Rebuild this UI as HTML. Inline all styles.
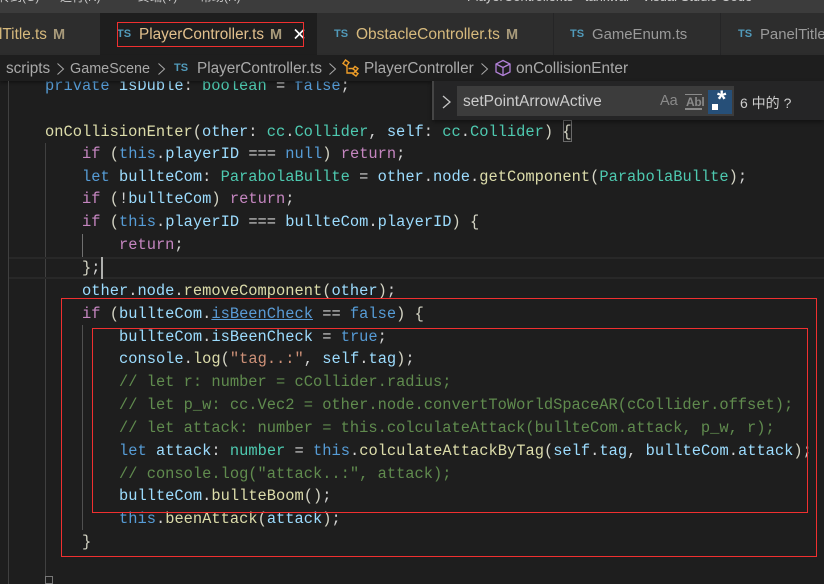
<!DOCTYPE html>
<html><head><meta charset="utf-8">
<style>
html,body{margin:0;padding:0;background:#1e1e1e}
#r{position:relative;width:824px;height:584px;overflow:hidden;background:#1e1e1e;font-family:"Liberation Sans","Noto Sans CJK SC",sans-serif}
.a{position:absolute}
.t{position:absolute;white-space:pre;font-size:15.3px;line-height:20px}
.l{position:absolute;white-space:pre;font-family:"Liberation Mono",monospace;font-size:15.4px;line-height:22px;color:#d4d4d4;margin-top:1px}
.k{color:#569cd6}.c{color:#c586c0}.v{color:#9cdcfe}.n{color:#4ec9b0}.f{color:#dcdcaa}.g{color:#608b4e}.s{color:#ce9178}.b{color:#d4d4c4}
.r{position:absolute;border:1px solid #f03030;box-sizing:border-box}
.g1{position:absolute;width:1px;background:#404040}
.ts{position:absolute;font-size:11px;font-weight:bold;color:#519aba;line-height:14px}
</style></head><body><div id="r">
<div class="l" style="left:45px;top:74px"><span class="k">private</span> <span class="v">isDuble</span>: <span class="n">boolean</span> = <span class="k">false</span>;</div>

<div class="a" style="left:0;top:0;width:824px;height:13px;background:#3c3c3c"></div>
<div class="t" style="left:-2px;top:-13px;color:#ccc;font-size:12px">转到(G)</div>
<div class="t" style="left:60px;top:-13px;color:#ccc;font-size:12px">运行(R)</div>
<div class="t" style="left:138px;top:-13px;color:#ccc;font-size:12px">终端(T)</div>
<div class="t" style="left:200px;top:-13px;color:#ccc;font-size:12px">帮助(H)</div>
<div class="t" style="left:467px;top:-13px;color:#ccc;font-size:13px">PlayerController.ts - tankwar - Visual Studio Code</div>

<div class="a" style="left:0;top:13px;width:824px;height:42px;background:#2d2d2d"></div>
<div class="a" style="left:100px;top:13px;width:217px;height:42px;background:#1e1e1e"></div>
<div class="a" style="left:553px;top:13px;width:1px;height:42px;background:#252526"></div>
<div class="a" style="left:720px;top:13px;width:1px;height:42px;background:#252526"></div>

<div class="t" style="left:-1px;top:25px;color:#d7ba7d">lTitle.ts</div>
<div class="t" style="left:53px;top:25px;color:#a89a7a;font-weight:bold;font-size:14.5px">M</div>
<div class="ts" style="left:117px;top:27px">TS</div>
<div class="t" style="left:139px;top:25px;color:#e2c08d">PlayerController.ts</div>
<div class="t" style="left:270px;top:25px;color:#a89a7a;font-weight:bold;font-size:14.5px">M</div>
<svg class="a" style="left:293px;top:27px" width="12" height="14"><path d="M2 2.5L11 11.5M11 2.5L2 11.5" stroke="#fff" stroke-width="1.6"/></svg>
<div class="ts" style="left:334px;top:27px">TS</div>
<div class="t" style="left:356px;top:25px;color:#d7ba7d;font-size:15.5px">ObstacleController.ts</div>
<div class="t" style="left:506px;top:25px;color:#a89a7a;font-weight:bold;font-size:14.5px">M</div>
<div class="ts" style="left:570px;top:27px">TS</div>
<div class="t" style="left:592px;top:25px;color:#9a9a9a;font-size:14.9px">GameEnum.ts</div>
<div class="ts" style="left:738px;top:27px">TS</div>
<div class="t" style="left:760px;top:25px;color:#9a9a9a;font-size:14.9px">PanelTitle</div>
<div class="r" style="left:117px;top:22px;width:187px;height:25px"></div>

<div class="a" style="left:0;top:55px;width:824px;height:26px;background:#1e1e1e;box-shadow:0 2px 3px rgba(0,0,0,.35)"></div>
<div class="t" style="left:6px;top:59px;color:#a9a9a9">scripts</div>
<svg class="a" style="left:56px;top:62px" width="9" height="14"><path d="M1.5 1.5L7.5 7L1.5 12.5" fill="none" stroke="#a9a9a9" stroke-width="1"/></svg>
<div class="t" style="left:70px;top:59px;color:#a9a9a9;font-size:14.4px">GameScene</div>
<svg class="a" style="left:157px;top:62px" width="9" height="14"><path d="M1.5 1.5L7.5 7L1.5 12.5" fill="none" stroke="#a9a9a9" stroke-width="1"/></svg>
<div class="ts" style="left:174px;top:61px">TS</div>
<div class="t" style="left:197px;top:59px;color:#a9a9a9">PlayerController.ts</div>
<svg class="a" style="left:328px;top:62px" width="9" height="14"><path d="M1.5 1.5L7.5 7L1.5 12.5" fill="none" stroke="#a9a9a9" stroke-width="1"/></svg>
<svg class="a" style="left:342px;top:59px" width="18" height="18"><g fill="none" stroke="#ee9d28" stroke-width="1.4"><path d="M3.5 1L7 3.5L4.5 7L1 4.5Z"/><path d="M13 7.5L16 9.5L14 12L11 10Z"/><path d="M13 12.5L16 14.5L14 17L11 15Z"/><path d="M5 7V14H11M6.5 9.5H11"/></g></svg>
<div class="t" style="left:364px;top:59px;color:#a9a9a9">PlayerController</div>
<svg class="a" style="left:480px;top:62px" width="9" height="14"><path d="M1.5 1.5L7.5 7L1.5 12.5" fill="none" stroke="#a9a9a9" stroke-width="1"/></svg>
<svg class="a" style="left:494px;top:59px" width="18" height="18"><g fill="none" stroke="#b180d7" stroke-width="1.3"><path d="M9 1.5L16 5V13L9 16.5L2 13V5Z"/><path d="M2 5L9 8.5L16 5M9 8.5V16.5"/></g></svg>
<div class="t" style="left:516px;top:59px;color:#a9a9a9;font-size:15.4px">onCollisionEnter</div>

<div class="a" style="left:8px;top:81px;width:1px;height:503px;background:#404040"></div>
<div class="g1" style="left:45px;top:143px;height:434px"></div>
<div class="g1" style="left:82px;top:325px;height:205px;background:#505050"></div>
<div class="g1" style="left:82px;top:234px;height:23px;background:#707070"></div>
<div class="a" style="left:9px;top:257px;width:815px;height:22px;border-top:2px solid #282828;border-bottom:2px solid #282828;box-sizing:border-box"></div>
<div class="a" style="left:101px;top:257px;width:2px;height:22px;background:#aeafad"></div>
<div class="a" style="left:563px;top:120px;width:9px;height:22px;border:1px solid #6a6a6a;box-sizing:border-box"></div>
<div class="a" style="left:45px;top:576px;width:8px;height:8px;border:1px solid #777;box-sizing:border-box"></div>

<div class="l" style="left:45px;top:120px"><span class="f">onCollisionEnter</span><span class="b">(</span><span class="v">other</span>: <span class="n">cc</span>.<span class="n">Collider</span>, <span class="v">self</span>: <span class="n">cc</span>.<span class="n">Collider</span><span class="b">)</span> <span class="b">{</span></div>
<div class="l" style="left:82px;top:142px"><span class="c">if</span> <span class="b">(</span><span class="k">this</span>.<span class="v">playerID</span> === <span class="k">null</span><span class="b">)</span> <span class="c">return</span>;</div>
<div class="l" style="left:82px;top:165px"><span class="k">let</span> <span class="v">bullteCom</span>: <span class="n">ParabolaBullte</span> = <span class="v">other</span>.<span class="v">node</span>.<span class="f">getComponent</span><span class="b">(</span><span class="n">ParabolaBullte</span><span class="b">)</span>;</div>
<div class="l" style="left:82px;top:187px"><span class="c">if</span> <span class="b">(</span>!<span class="v">bullteCom</span><span class="b">)</span> <span class="c">return</span>;</div>
<div class="l" style="left:82px;top:210px"><span class="c">if</span> <span class="b">(</span><span class="k">this</span>.<span class="v">playerID</span> === <span class="v">bullteCom</span>.<span class="v">playerID</span><span class="b">)</span> <span class="b">{</span></div>
<div class="l" style="left:119px;top:233px"><span class="c">return</span>;</div>
<div class="l" style="left:82px;top:256px"><span class="b">}</span>;</div>
<div class="l" style="left:82px;top:279px"><span class="v">other</span>.<span class="v">node</span>.<span class="f">removeComponent</span><span class="b">(</span><span class="v">other</span><span class="b">)</span>;</div>
<div class="l" style="left:82px;top:302px"><span class="c">if</span> <span class="b">(</span><span class="v">bullteCom</span>.<span class="v" style="text-decoration:underline;color:#5a9bd5">isBeenCheck</span> == <span class="k">false</span><span class="b">)</span> <span class="b">{</span></div>
<div class="l" style="left:119px;top:325px"><span class="v">bullteCom</span>.<span class="v">isBeenCheck</span> = <span class="k">true</span>;</div>
<div class="l" style="left:119px;top:347px"><span class="v">console</span>.<span class="f">log</span><span class="b">(</span><span class="s">"tag..:"</span>, <span class="v">self</span>.<span class="v">tag</span><span class="b">)</span>;</div>
<div class="l g" style="left:119px;top:370px">// let r: number = cCollider.radius;</div>
<div class="l g" style="left:119px;top:393px">// let p_w: cc.Vec2 = other.node.convertToWorldSpaceAR(cCollider.offset);</div>
<div class="l g" style="left:119px;top:416px">// let attack: number = this.colculateAttack(bullteCom.attack, p_w, r);</div>
<div class="l" style="left:119px;top:439px"><span class="k">let</span> <span class="v">attack</span>: <span class="n">number</span> = <span class="k">this</span>.<span class="f">colculateAttackByTag</span><span class="b">(</span><span class="v">self</span>.<span class="v">tag</span>, <span class="v">bullteCom</span>.<span class="v">attack</span><span class="b">)</span>;</div>
<div class="l g" style="left:119px;top:462px">// console.log("attack..:", attack);</div>
<div class="l" style="left:119px;top:484px"><span class="v">bullteCom</span>.<span class="f">bullteBoom</span><span class="b">()</span>;</div>
<div class="l" style="left:119px;top:507px"><span class="k">this</span>.<span class="f">beenAttack</span><span class="b">(</span><span class="v">attack</span><span class="b">)</span>;</div>
<div class="l" style="left:82px;top:530px"><span class="b">}</span></div>

<div class="a" style="left:432px;top:81px;width:392px;height:39px;background:#252526;box-shadow:0 2px 4px rgba(0,0,0,.4)"></div>
<div class="a" style="left:432px;top:81px;width:2px;height:39px;background:#454545"></div>
<svg class="a" style="left:441px;top:94px" width="11" height="16"><path d="M2 2L9 8L2 14" fill="none" stroke="#c5c5c5" stroke-width="1.3"/></svg>
<div class="a" style="left:457px;top:86px;width:277px;height:30px;background:#3c3c3c"></div>
<div class="t" style="left:463px;top:92px;color:#ccc;font-size:15.5px">setPointArrowActive</div>
<div class="t" style="left:660px;top:91px;color:#8a8a8a;font-size:14.5px">Aa</div>
<div class="t" style="left:686px;top:92px;color:#8a8a8a;font-size:12px;font-weight:bold;letter-spacing:-.3px">Abl</div>
<div class="a" style="left:685px;top:94px;width:17px;height:1px;background:#8a8a8a"></div>
<div class="a" style="left:685px;top:108px;width:17px;height:2px;background:#8a8a8a"></div>
<div class="a" style="left:708px;top:90px;width:24px;height:24px;background:#264f78"></div>
<div class="a" style="left:712px;top:104px;width:6px;height:6px;background:#fff"></div>
<div class="t" style="left:717px;top:90px;color:#fff;font-size:24px;font-weight:bold">*</div>
<div class="t" style="left:740px;top:93px;color:#ccc;font-size:14px">6 中的 ?</div>

<div class="r" style="left:61px;top:298px;width:756px;height:259px"></div>
<div class="r" style="left:92px;top:328px;width:716px;height:185px"></div>
</div></body></html>
